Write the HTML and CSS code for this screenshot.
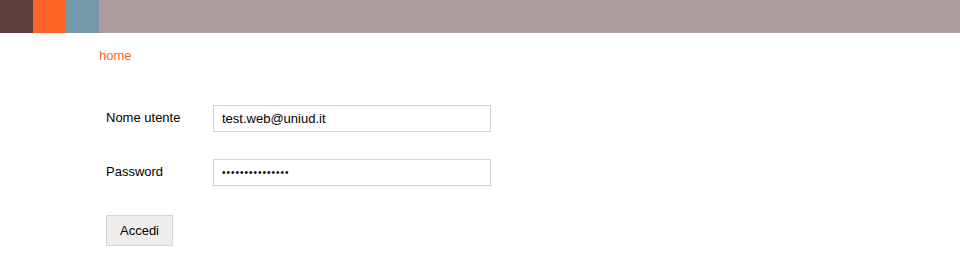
FILE: index.html
```html
<!DOCTYPE html>
<html lang="it">
<head>
<meta charset="utf-8">
<title>Login</title>
<link rel="stylesheet" href="styles.css">
</head>
<body>
<header class="topbar">
  <span class="sq sq-brown"></span>
  <span class="sq sq-orange"></span>
  <span class="sq sq-blue"></span>
</header>
<main class="content">
  <nav class="crumbs"><a href="#" class="home">home</a></nav>
  <form class="login">
    <label class="lbl" for="u">Nome utente</label>
    <input class="field" id="u" type="text" value="test.web@uniud.it">
    <label class="lbl" for="p">Password</label>
    <input class="field pw" id="p" type="password" value="testwebpassword">
    <div class="actions"><button type="button" class="btn">Accedi</button></div>
  </form>
</main>
</body>
</html>
```
FILE: styles.css
```css
html, body { margin: 0; padding: 0; background: #fff; }
body { font-family: "Liberation Sans", Arial, sans-serif; font-size: 13px; color: #000; }
.topbar { display: flex; height: 33px; background: #ad9d9c; }
.sq { width: 33px; height: 33px; display: block; }
.sq-brown { background: #5c3d3b; }
.sq-orange { background: #ff6427; }
.sq-blue { background: #7599a9; }
.content { padding-left: 99px; }
.crumbs { padding-top: 15px; height: 15px; line-height: 15px; }
.home { color: #ff6427; text-decoration: none; font-size: 13px; }
.login {
  display: grid;
  grid-template-columns: 107px 278px;
  row-gap: 27px;
  align-items: center;
  margin: 42px 0 0 7px;
}
.lbl { font-size: 13px; line-height: 15px; position: relative; top: -1px; }
.field {
  box-sizing: border-box;
  width: 278px; height: 27px;
  margin: 0;
  border: 1px solid #dccfd1;
  padding: 0 8px;
  font-family: "Liberation Sans", Arial, sans-serif;
  font-size: 13px;
  color: #000;
  background: #fff;
  outline: none;
}
.pw { font-size: 10px; letter-spacing: 1px; }
.actions { grid-column: 1 / 3; padding-top: 2px; }
.btn {
  box-sizing: border-box;
  width: 67px; height: 31px;
  background: #f0eeed;
  border: 1px solid #d9d4d3;
  border-radius: 0;
  font-family: "Liberation Sans", Arial, sans-serif;
  font-size: 13px;
  color: #000;
  padding: 0;
}
```
